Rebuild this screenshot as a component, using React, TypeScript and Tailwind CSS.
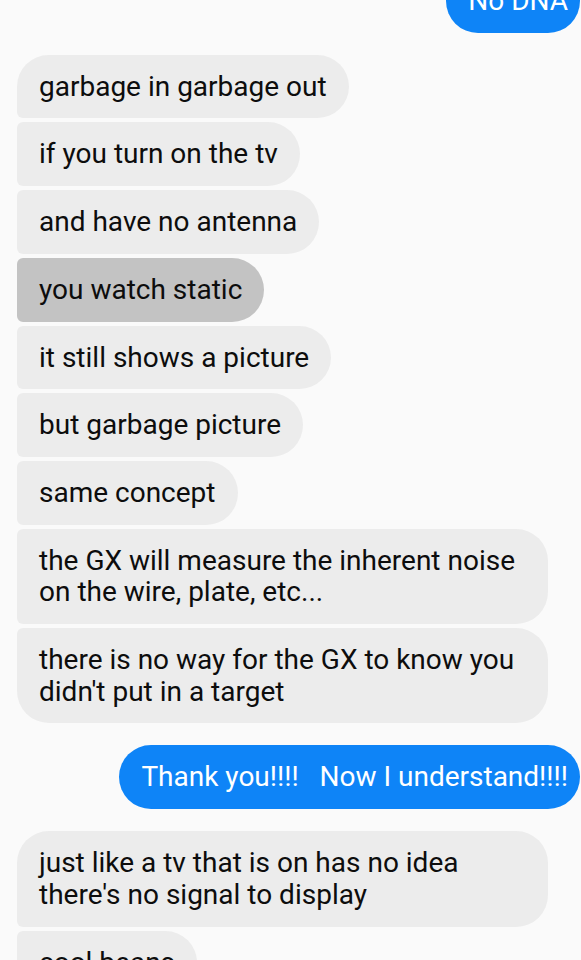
import React from 'react';

type Pos = 'first' | 'middle' | 'last' | 'single';

const leftRadius: Record<Pos, string> = {
  first: 'rounded-tl-[32px] rounded-bl-[6px]',
  middle: 'rounded-tl-[6px] rounded-bl-[6px]',
  last: 'rounded-tl-[6px] rounded-bl-[32px]',
  single: 'rounded-tl-[32px] rounded-bl-[32px]',
};

const Incoming: React.FC<{ text: string; pos: Pos; selected?: boolean }> = ({ text, pos, selected }) => (
  <div className="flex justify-start pl-[17px] pr-[33px]">
    <div
      className={`px-[22px] py-[16px] text-[28px] leading-[31.7px] text-[#0d0d0d] rounded-r-[32px] ${leftRadius[pos]} ${
        selected ? 'bg-[#c3c3c3]' : 'bg-[#ececec]'
      }`}
    >
      {text}
    </div>
  </div>
);

const Outgoing: React.FC<{ text: string; className?: string }> = ({ text, className = '' }) => (
  <div className={`flex justify-end ${className}`}>
    <div className="bg-[#0e84f7] text-white text-[28px] leading-[31.7px] pl-[22px] pr-[12px] py-[16px] rounded-[32px] whitespace-pre">
      {text}
    </div>
  </div>
);

const App: React.FC = () => {
  return (
    <div
      className="w-[581px] h-[960px] overflow-hidden bg-[#fafafa]"
      style={{ fontFamily: 'Roboto, "Noto Sans", sans-serif' }}
    >
      <Outgoing text="No DNA" className="-mt-[31px] pr-[1px]" />

      <div className="mt-[22px] flex flex-col gap-[4px]">
        <Incoming pos="first" text="garbage in garbage out" />
        <Incoming pos="middle" text="if you turn on the tv" />
        <Incoming pos="middle" text="and have no antenna" />
        <Incoming pos="middle" text="you watch static" selected />
        <Incoming pos="middle" text="it still shows a picture" />
        <Incoming pos="middle" text="but garbage picture" />
        <Incoming pos="middle" text="same concept" />
        <Incoming pos="middle" text="the GX will measure the inherent noise on the wire, plate, etc..." />
        <Incoming pos="last" text="there is no way for the GX to know you didn't put in a target" />
      </div>

      <Outgoing text="Thank you!!!!   Now I understand!!!!" className="mt-[22px] pr-[1px]" />

      <div className="mt-[22px] flex flex-col gap-[4px]">
        <Incoming pos="first" text="just like a tv that is on has no idea there's no signal to display" />
        <Incoming pos="middle" text="cool beans" />
      </div>
    </div>
  );
};

export default App;
